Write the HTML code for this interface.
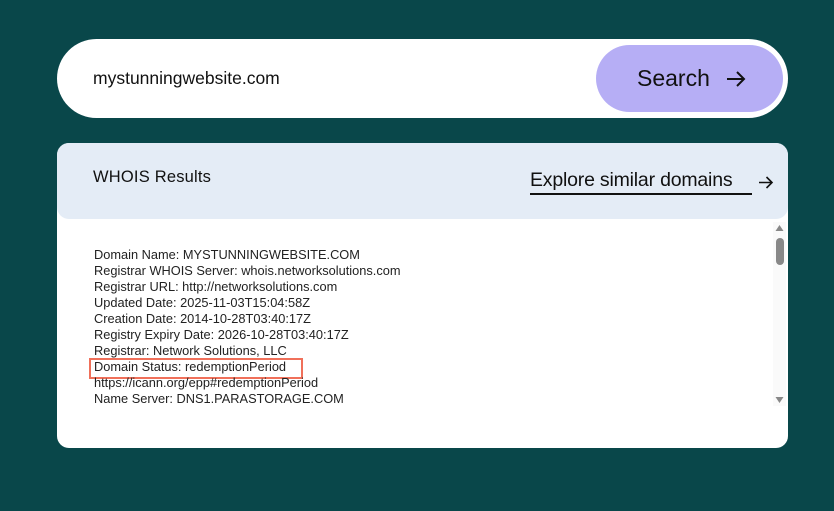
<!DOCTYPE html>
<html><head><style>
body{margin:0;width:834px;height:511px;background:#09474a;font-family:"Liberation Sans",sans-serif;position:relative;overflow:hidden}
.sb{position:absolute;left:57px;top:39px;width:731px;height:79px;background:#fff;border-radius:40px}
.sb .t{position:absolute;left:36px;top:29px;font-size:17.5px;color:#111}
.btn{position:absolute;left:539px;top:6px;width:187px;height:67px;background:#b6aef5;border-radius:34px;}
.btn .s{position:absolute;left:41px;top:20px;font-size:23px;color:#111}
.card{position:absolute;left:57px;top:143px;width:731px;height:305px;background:#fff;border-radius:12px;overflow:hidden}
.hd{height:76px;background:#e4ecf6;position:relative;border-radius:0 0 12px 12px}
.hd .a{position:absolute;left:36px;top:25px;font-size:16.5px;color:#111;letter-spacing:0.2px}
.hd .b{position:absolute;left:473px;top:26px;font-size:19.5px;color:#111;letter-spacing:-0.2px}
.hd .u{position:absolute;left:473px;top:50px;width:222px;height:2px;background:#111}
.lines{position:absolute;left:37px;top:104px;font-size:12.8px;line-height:16px;color:#222}
.box{position:absolute;left:32px;top:215px;width:210px;height:17px;border:2px solid #f0705a}
.scr{position:absolute;left:716px;top:79px;width:13px;height:184px;background:#fafafa}
.th{position:absolute;left:3px;top:16px;width:8px;height:27px;background:#888;border-radius:4px}
</style></head><body>
<div class="sb"><div class="t">mystunningwebsite.com</div><div class="btn"><div class="s">Search</div><svg style="position:absolute;left:130px;top:26px" width="20" height="16"><path d="M1 8H18M11 1L18 8L11 15" stroke="#111" stroke-width="2" fill="none"/></svg></div></div>
<div class="card">
<div class="hd"><div class="a">WHOIS Results</div><div class="b">Explore similar domains</div><div class="u"></div><svg style="position:absolute;left:702px;top:33px" width="15" height="13"><path d="M0 6.5H13M7.5 1L13 6.5L7.5 12" stroke="#111" stroke-width="1.6" fill="none"/></svg></div>
<div class="box"></div>
<div class="lines">Domain Name: MYSTUNNINGWEBSITE.COM<br>Registrar WHOIS Server: whois.networksolutions.com<br>Registrar URL: http://networksolutions.com<br>Updated Date: 2025-11-03T15:04:58Z<br>Creation Date: 2014-10-28T03:40:17Z<br>Registry Expiry Date: 2026-10-28T03:40:17Z<br>Registrar: Network Solutions, LLC<br>Domain Status: redemptionPeriod<br>https://icann.org/epp#redemptionPeriod<br>Name Server: DNS1.PARASTORAGE.COM</div>
<div class="scr"><svg width="13" height="184" style="position:absolute;left:0;top:0"><path d="M2.5 9L6.5 3L10.5 9Z" fill="#888"/><path d="M2.5 175L6.5 181L10.5 175Z" fill="#888"/></svg><div class="th"></div></div>
</div>
</body></html>
